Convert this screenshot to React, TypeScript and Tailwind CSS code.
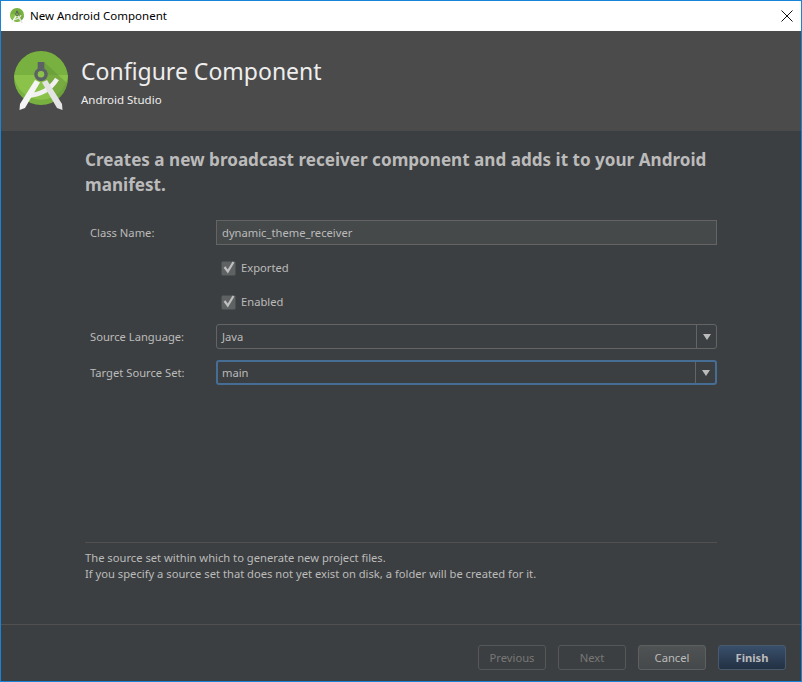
import React from "react";

const font = "font-['Noto_Sans',sans-serif]";

const AndroidLogo = ({ size }: { size: number }) => (
  <svg width={size} height={size} viewBox="0 0 54 54" className="shrink-0 overflow-visible">
    <circle cx="27" cy="27" r="27" fill="#78b13f" />
    <path d="M0.1 24 H53.9 A27 27 0 0 1 0.1 24 Z" fill="#8bc34a" />
    <path d="M30 11 L53 32 A27 27 0 0 1 45 47 L30 30 Z" fill="#5f8f38" opacity="0.45" />
    {/* compass legs and arc */}
    <path d="M13 44.5 Q33 44 43 28" fill="none" stroke="#f1f1f1" strokeWidth="4.5" />
    <path d="M21 29 L26 31.5 L11 57 L5.5 59 L6 53 Z" fill="#f5f5f5" />
    <path d="M33 29 L28 31.5 L43 57 L48.5 59 L48 53 Z" fill="#e4e4e4" />
    {/* compass head */}
    <path d="M23.7 11 H30.3 V17.5 A6.8 6.8 0 1 1 23.7 17.5 Z" fill="#5c6165" />
    <circle cx="27" cy="23.3" r="3.3" fill="#8bc34a" />
  </svg>
);

const Caret = () => (
  <span className="flex h-full w-5 items-center justify-center border-l border-[#646464]">
    <span className="h-0 w-0 border-x-[4px] border-t-[6px] border-x-transparent border-t-[#bbbbbb]" />
  </span>
);

const Field = ({ label, children }: { label: string; children: React.ReactNode }) => (
  <div className="flex items-center">
    <span className="w-[131px] pl-[5px] pt-px text-[11.2px] text-[#bbbbbb]">{label}</span>
    {children}
  </div>
);

const Check = ({ label }: { label: string }) => (
  <div className="flex h-4 items-center pl-[136px]">
    <span className="relative h-[15px] w-[15px] rounded-[2px] border border-[#4c4f50] bg-[#5f6263]">
      <svg viewBox="0 0 15 15" className="absolute -left-px -top-[3px] h-[15px] w-[15px] overflow-visible">
        <path d="M3.5 8 L6.8 12.5 L12.5 3" fill="none" stroke="#bfbfbf" strokeWidth="2.2" />
      </svg>
    </span>
    <span className="ml-[5px] text-[11.2px] text-[#bbbbbb]">{label}</span>
  </div>
);

const Select = ({ value, focused }: { value: string; focused?: boolean }) => (
  <div
    className={
      focused
        ? "flex h-[25px] w-[501px] items-center rounded-[3px] border-2 border-[#466d94] bg-[#3c3f41] pl-[4px]"
        : "flex h-[25px] w-[501px] items-center rounded-[3px] border border-[#646464] bg-[#3c3f41] pl-[5px]"
    }
  >
    <span className="flex-1 pt-px text-[11.2px] text-[#bbbbbb]">{value}</span>
    <Caret />
  </div>
);

const Button = ({ label, kind }: { label: string; kind?: "off" | "main" }) => {
  let cls = "border-[#5e6060] bg-gradient-to-b from-[#505354] to-[#45484a] text-[#bbbbbb]";
  if (kind === "off") cls = "border-[#555759] bg-transparent text-[#777777]";
  if (kind === "main") cls = "border-[#4a5a6e] bg-gradient-to-b from-[#384f6b] to-[#233143] font-bold text-[#bbbbbb]";
  return (
    <button className={"h-[25px] w-[68px] rounded-[3px] border pt-px text-[11.2px] " + cls}>{label}</button>
  );
};

export default function App() {
  return (
    <div className={"flex h-[682px] w-[802px] flex-col border border-[#1883d7] bg-[#3c3f41] " + font}>
      {/* title bar */}
      <div className="flex h-[30px] shrink-0 items-center bg-white pl-[9px] pr-[8px]">
        <span className="-mt-[2px] flex">
          <AndroidLogo size={14} />
        </span>
        <span className="ml-[6px] text-[11.5px] text-black">New Android Component</span>
        <svg viewBox="0 0 12 12" className="ml-auto h-3 w-3">
          <path d="M0.5 0.5 L11.5 11.5 M11.5 0.5 L0.5 11.5" stroke="#111111" strokeWidth="1" fill="none" />
        </svg>
      </div>

      {/* header */}
      <div className="flex h-[100px] shrink-0 items-start bg-[#4b4b4b] pl-[13px] pt-[20px]">
        <AndroidLogo size={54} />
        <div className="ml-[13px] mt-[5px] text-white">
          <div className="text-[23px] leading-[30px] text-[#eeeeee]">Configure Component</div>
          <div className="mt-[6px] text-[11.5px] leading-4 text-[#eeeeee]">Android Studio</div>
        </div>
      </div>

      {/* form */}
      <div className="flex flex-1 flex-col pl-[84px] pr-[84px]">
        <h1 className="mt-[16px] w-[632px] text-[17.1px] font-bold leading-[25px] text-[#bbbbbb]">
          Creates a new broadcast receiver component and adds it to your Android manifest.
        </h1>
        <div className="mt-[23px] flex flex-col">
          <Field label="Class Name:">
            <div className="flex h-[25px] w-[501px] items-center border border-[#646464] bg-[#45494a] pl-[5px] pt-px text-[11.2px] text-[#bbbbbb]">
              dynamic_theme_receiver
            </div>
          </Field>
          <div className="mt-[15px]">
            <Check label="Exported" />
          </div>
          <div className="mt-[18px]">
            <Check label="Enabled" />
          </div>
          <div className="mt-[14px]">
            <Field label="Source Language:">
              <Select value="Java" />
            </Field>
          </div>
          <div className="mt-[11px]">
            <Field label="Target Source Set:">
              <Select value="main" focused />
            </Field>
          </div>
        </div>

        <div className="mt-auto mb-[42px] w-[632px] border-t border-[#515151] pt-[7px] text-[11.2px] leading-4 text-[#bbbbbb]">
          <p>The source set within which to generate new project files.</p>
          <p>If you specify a source set that does not yet exist on disk, a folder will be created for it.</p>
        </div>
      </div>

      {/* footer */}
      <div className="flex h-[57px] shrink-0 items-start justify-end gap-3 border-t border-[#515151] pt-[20px] pr-[15px]">
        <Button label="Previous" kind="off" />
        <Button label="Next" kind="off" />
        <Button label="Cancel" />
        <Button label="Finish" kind="main" />
      </div>
    </div>
  );
}
